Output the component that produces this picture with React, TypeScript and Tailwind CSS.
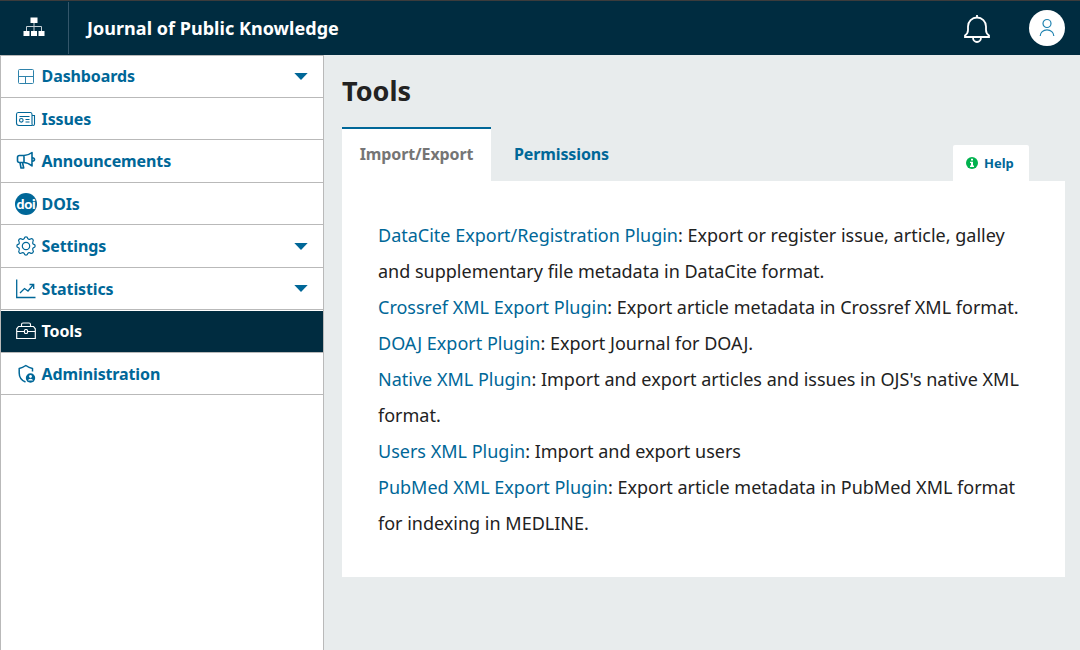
import React from 'react';

const DashboardIcon = () => (
  <svg width="22" height="22" viewBox="0 0 22 22" fill="none" stroke="#2f83ab" strokeWidth="1">
    <rect x="3.500" y="3.500" width="15" height="14" rx="1" />
    <path d="M3.500 10.500h15M10.500 10.500v7" />
  </svg>
);

const IssuesIcon = () => (
  <svg width="22" height="22" viewBox="0 0 22 22" fill="none" stroke="currentColor" strokeWidth="1.1">
    <path d="M17 17.500H4A2.500 2.500 0 0 1 1.500 15V6.500Q1.500 4.500 3.200 4.500H15.500Q17 4.500 17 6.500V16Q17 17.500 18.200 17.500T19.500 16V7.500H17" />
    <circle cx="6.300" cy="12.300" r="1.800" />
    <path d="M4.500 8.500H14.500M10.500 11.500H14.500M10.500 14H14.500" />
  </svg>
);

const AnnounceIcon = () => (
  <svg width="22" height="22" viewBox="0 0 22 22" fill="none" stroke="currentColor" strokeWidth="1.600" strokeLinejoin="round">
    <path d="M9 5.500H4.500A2 2 0 0 0 2.500 7.500V10.500A2 2 0 0 0 4.500 12.500H9C12 12.500 14.500 14 17 16V2.500C14.500 4.500 12 5.500 9 5.500ZM9 5.500V12.500M5 12.500L6 18H8.700L7.500 12.500M17 7.500Q19.500 8 19.500 9.500T17 11.500" />
  </svg>
);

const DoiIcon = () => (
  <span className="flex h-[22px] w-[22px] items-center justify-center rounded-full bg-[#006798] font-['Lato'] text-[14px] font-black leading-none tracking-[-0.3px] text-white">
    doi
  </span>
);

const GearIcon = () => (
  <svg width="22" height="22" viewBox="0 0 22 22" fill="none" stroke="currentColor" strokeWidth="1.200" strokeLinejoin="round">
    <path d="M9.200 3.700Q9.500 1.800 11 1.800T12.800 3.700Q13.800 4.800 15.200 4.100Q16.600 3 17.700 4.200T17.900 6.800Q17.200 8.200 18.300 9.200Q20.200 9.500 20.200 11T18.300 12.800Q17.200 13.800 17.900 15.200Q19 16.600 17.800 17.700T15.200 17.900Q13.800 17.200 12.800 18.300Q12.500 20.200 11 20.200T9.200 18.300Q8.200 17.200 6.800 17.900Q5.400 19 4.300 17.800T4.100 15.200Q4.800 13.800 3.700 12.800Q1.800 12.500 1.800 11T3.700 9.200Q4.800 8.200 4.100 6.800Q3 5.400 4.200 4.300T6.800 4.100Q8.200 4.800 9.200 3.700Z" />
    <circle cx="11" cy="11" r="3.700" />
  </svg>
);

const StatsIcon = () => (
  <svg width="22" height="22" viewBox="0 0 22 22" fill="none" stroke="currentColor" strokeWidth="1.300">
    <path d="M1.700 1.500V19.500H20.500" />
    <path d="M5 15L9.500 10.500L13 13L18.500 6.500M14.500 6.500H18.700V11" />
  </svg>
);

const ToolsIcon = () => (
  <svg width="22" height="22" viewBox="0 0 22 22" fill="none" stroke="currentColor" strokeWidth="1.150" className="-mt-px">
    <path d="M6.500 6.500V4.500Q6.500 3 8 3H14Q15.500 3 15.500 4.500V6.500" />
    <path d="M3.500 6.500H18.500L20.300 8.800V18.500H1.700V8.800ZM2 11.500H9M13 11.500H20" />
    <rect x="9.500" y="9.500" width="3" height="4" rx="1" />
  </svg>
);

const AdminIcon = () => (
  <svg width="22" height="22" viewBox="0 0 22 22" fill="none" stroke="currentColor" strokeWidth="1.500" strokeLinejoin="round">
    <path d="M17.500 8.500V5.500Q14 4.800 10.800 2.500Q7.500 4.800 4.200 5.500V10Q4.200 16.500 10.500 19" />
    <circle cx="15.500" cy="15" r="4.700" fill="currentColor" stroke="none" />
    <circle cx="15.500" cy="13.500" r="1.400" fill="white" stroke="none" />
    <path d="M13 17.500Q13.300 15.700 15.500 15.700T18 17.500Z" fill="white" stroke="none" />
  </svg>
);

type Item = { label: string; icon: React.ReactNode; height: string; caret?: boolean; active?: boolean; raised?: boolean };

const items: Item[] = [
  { label: 'Dashboards', icon: <DashboardIcon />, height: 'h-[42px]', caret: true, raised: true },
  { label: 'Issues', icon: <IssuesIcon />, height: 'h-[42px]' },
  { label: 'Announcements', icon: <AnnounceIcon />, height: 'h-[43px]' },
  { label: 'DOIs', icon: <DoiIcon />, height: 'h-[42px]' },
  { label: 'Settings', icon: <GearIcon />, height: 'h-[43px]', caret: true },
  { label: 'Statistics', icon: <StatsIcon />, height: 'h-[42px]', caret: true },
  { label: 'Tools', icon: <ToolsIcon />, height: 'h-[43px]', active: true, raised: true },
  { label: 'Administration', icon: <AdminIcon />, height: 'h-[42px]' },
];

const plugins = [
  ['DataCite Export/Registration Plugin', ': Export or register issue, article, galley and supplementary file metadata in DataCite format.'],
  ['Crossref XML Export Plugin', ': Export article metadata in Crossref XML format.'],
  ['DOAJ Export Plugin', ': Export Journal for DOAJ.'],
  ['Native XML Plugin', ": Import and export articles and issues in OJS's native XML format."],
  ['Users XML Plugin', ': Import and export users'],
  ['PubMed XML Export Plugin', ': Export article metadata in PubMed XML format for indexing in MEDLINE.'],
];

function Header() {
  return (
    <header className="flex h-[55px] shrink-0 border-t border-[#3c3c3c] bg-[#002c40] text-white">
      <div className="mt-px flex h-[52px] w-[69px] items-center justify-center border-r border-[#33566a]">
        <svg width="22" height="20" viewBox="0 0 22 20" className="mb-[2px] mr-px">
          <path d="M7.500 0.500h7v5.500h-7zM0.500 14h6v5h-6zM8 14h6v5H8zM15.500 14h6v5h-6z" fill="white" />
          <path d="M11 6v8M3.500 14v-4.500h15V14" fill="none" stroke="#c5d0d6" strokeWidth="1" />
        </svg>
      </div>
      <div className="flex flex-1 items-center pl-[18px] text-[18px] font-bold tracking-[0.035px]">Journal of Public Knowledge</div>
      <div className="flex items-center gap-[38px] pr-[15px]">
        <svg width="28" height="30" viewBox="0 0 28 30" fill="none" stroke="white" strokeWidth="1.800" className="mt-px">
          <path d="M14 1V3.500M2 23V21.500Q5 19.500 5 16V12.500A9 9 0 0 1 23 12.500V16Q23 19.500 26 21.500V23ZM10 23.500A4 4.500 0 0 0 18 23.500" />
        </svg>
        <div className="flex h-9 w-9 items-center justify-center rounded-full bg-white">
          <svg width="18" height="20" viewBox="0 0 18 20" fill="none" stroke="#1e82b0" strokeWidth="1.200">
            <circle cx="9" cy="5.500" r="4" />
            <path d="M2.200 18A6.800 6.200 0 0 1 15.800 18" />
          </svg>
        </div>
      </div>
    </header>
  );
}

function Sidebar() {
  return (
    <nav className="w-[324px] shrink-0 border-x border-t border-[#b9b9b9] bg-white">
      {items.map((it) => (
        <div
          key={it.label}
          className={`flex items-center border-b border-[#b9b9b9] pl-[14px] pr-[15px] text-[16px] font-bold tracking-[-0.12px] ${it.height} ${
            it.active ? 'border-t border-t-white bg-[#002c40] bg-clip-padding text-white' : 'text-[#006798]'
          }`}
        >
          {it.icon}
          <span className={`ml-[4.6px] flex-1 ${it.raised ? 'pb-[2px]' : ''}`}>{it.label}</span>
          {it.caret && (
            <svg width="14" height="7" viewBox="0 0 14 7" fill="#006798">
              <path d="M0.300 0H13.700L7 7Z" />
            </svg>
          )}
        </div>
      ))}
    </nav>
  );
}

export default function App() {
  return (
    <div className="flex h-[650px] w-[1080px] flex-col overflow-hidden bg-[#e8eced] font-['Noto_Sans',sans-serif] text-[#222]">
      <Header />
      <div className="flex flex-1">
        <Sidebar />
        <main className="flex-1 pl-[18px] pr-[15px] pt-[18px]">
          <h1 className="h-[54px] text-[27px] font-bold leading-[36px]">Tools</h1>
          <div className="flex h-[54px] items-end">
            <div className="flex h-[54px] w-[149px] items-center justify-center border-t-2 border-[#006798] bg-white pb-[2px] text-[16px] font-bold tracking-[-0.12px] text-[#757575]">
              Import/Export
            </div>
            <div className="flex h-[54px] items-center pl-[23px] text-[16px] font-bold tracking-[-0.12px] text-[#006798]">Permissions</div>
            <div className="ml-auto mr-[36px] flex h-[36px] w-[76px] items-center rounded-t-[2px] bg-white pl-[13px] text-[13px] font-bold text-[#006798]">
              <svg width="12" height="12" viewBox="0 0 12 12" className="mr-[6px]">
                <circle cx="6" cy="6" r="6" fill="#00b24e" />
                <path d="M5 1.800h2v1.600H5zM4 4.700h3v3.800h1V10H4V8.500h1V6.100H4z" fill="white" />
              </svg>
              <span className="pt-px">Help</span>
            </div>
          </div>
          <section className="h-[396px] bg-white px-[36px] pt-[36px] text-[18px] leading-[36px]">
            <ul>
              {plugins.map(([name, text]) => (
                <li key={name}>
                  <a className="text-[#006798]">{name}</a>
                  {text}
                </li>
              ))}
            </ul>
          </section>
        </main>
      </div>
    </div>
  );
}
